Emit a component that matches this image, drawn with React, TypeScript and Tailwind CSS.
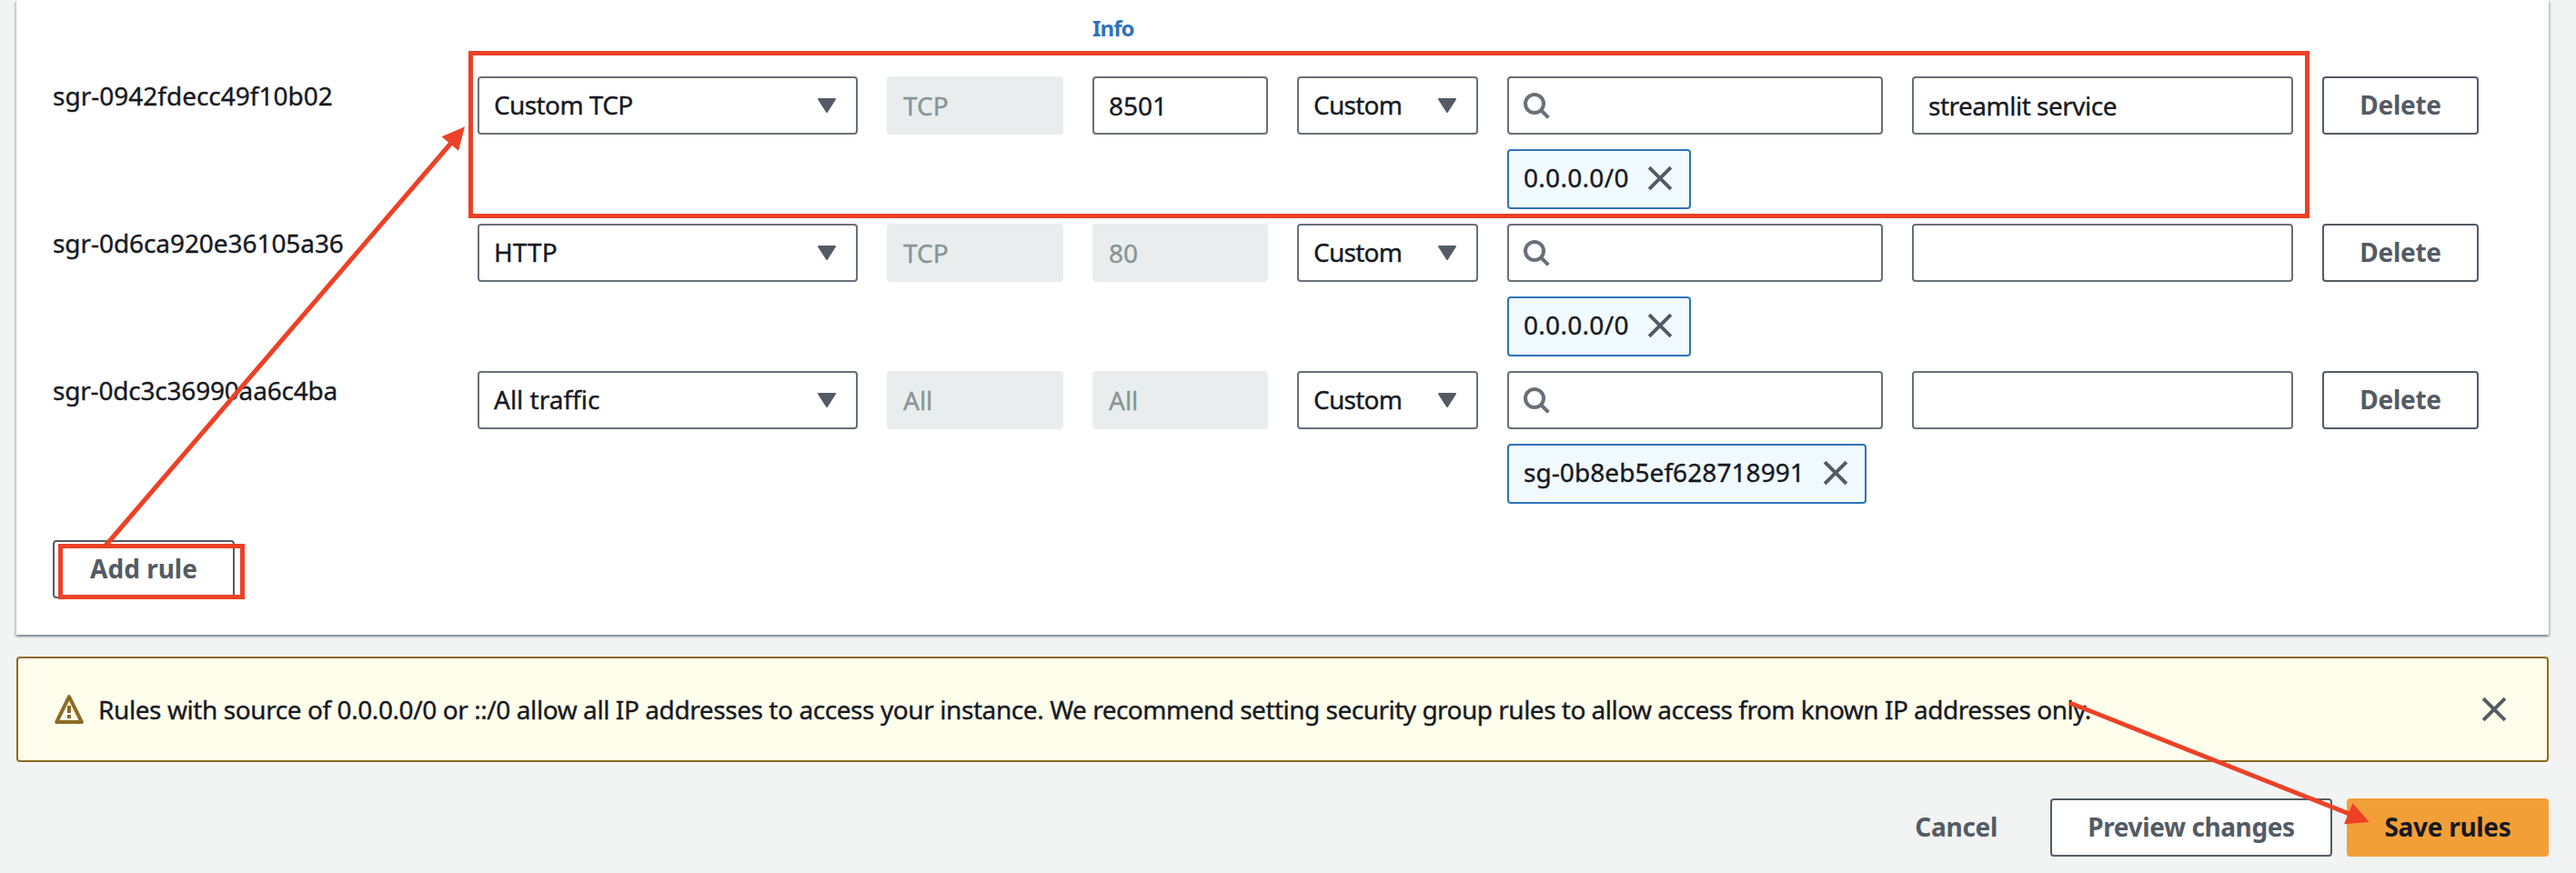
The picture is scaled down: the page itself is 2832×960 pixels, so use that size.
import React from 'react';

type Rule = {
  id: string;
  idClass: string;
  type: string;
  typeClass: string;
  protocol: string;
  port: string;
  portEditable: boolean;
  source: string;
  sourceClass: string;
  description: string;
};

const rules: Rule[] = [
  {
    id: 'sgr-0942fdecc49f10b02',
    idClass: 'tracking-[0px]',
    type: 'Custom TCP',
    typeClass: 'tracking-[-0.6px]',
    protocol: 'TCP',
    port: '8501',
    portEditable: true,
    source: '0.0.0.0/0',
    sourceClass: 'tracking-[0.3px]',
    description: 'streamlit service',
  },
  {
    id: 'sgr-0d6ca920e36105a36',
    idClass: 'tracking-[-0.07px]',
    type: 'HTTP',
    typeClass: 'tracking-[0.1px]',
    protocol: 'TCP',
    port: '80',
    portEditable: false,
    source: '0.0.0.0/0',
    sourceClass: 'tracking-[0.3px]',
    description: '',
  },
  {
    id: 'sgr-0dc3c36990aa6c4ba',
    idClass: 'tracking-[-0.2px]',
    type: 'All traffic',
    typeClass: 'tracking-[0px]',
    protocol: 'All',
    port: 'All',
    portEditable: false,
    source: 'sg-0b8eb5ef628718991',
    sourceClass: 'tracking-[0.07px]',
    description: '',
  },
];

function Caret() {
  return (
    <svg className="h-4 w-5 shrink-0" viewBox="0 0 20 16">
      <path d="M1 1H19L10 15Z" fill="#545b64" stroke="#545b64" strokeWidth="2" strokeLinejoin="round" />
    </svg>
  );
}

function SearchIcon() {
  return (
    <svg className="size-8 shrink-0" viewBox="0 0 32 32" fill="none" stroke="#687078" strokeWidth="4">
      <circle cx="14" cy="14" r="10" />
      <path d="M21 21L29.3 29.3" />
    </svg>
  );
}

function CloseIcon() {
  return (
    <svg className="size-8 shrink-0" viewBox="0 0 32 32" fill="none" stroke="#545b64" strokeWidth="4">
      <path d="M4.1 4.1L27.9 27.9M27.9 4.1L4.1 27.9" />
    </svg>
  );
}

function WarningIcon() {
  return (
    <svg className="size-8 shrink-0" viewBox="0 0 32 32">
      <path d="M16 2.2L29.8 30H2.2Z" fill="none" stroke="#8d6b24" strokeWidth="4" strokeLinejoin="round" />
      <path d="M14 12h4v8h-4zM14 22h4v4h-4z" fill="#8d6b24" />
    </svg>
  );
}

function Select({ label, labelClass, inset }: { label: string; labelClass: string; inset: string }) {
  return (
    <div className={`flex h-16 items-center justify-between rounded-[4px] border-2 border-[#687078] bg-white pl-4 ${inset}`}>
      <span className={`pb-[2px] ${labelClass}`}>{label}</span>
      <Caret />
    </div>
  );
}

function Disabled({ children }: { children: string }) {
  return (
    <div className="flex h-16 items-center rounded-[4px] bg-[#eaeded] pl-[18px] text-[#879596]">{children}</div>
  );
}

function Field({ children, className = '' }: { children?: React.ReactNode; className?: string }) {
  return (
    <div className={`flex h-16 items-center rounded-[4px] border-2 border-[#687078] bg-white ${className}`}>
      {children}
    </div>
  );
}

function OutlineButton({ children, className }: { children: string; className: string }) {
  return (
    <button
      className={`flex h-16 items-center justify-center rounded-[4px] border-2 border-[#545b64] bg-white pb-[2px] font-bold text-[#545b64] [-webkit-text-stroke:0px] ${className}`}
    >
      {children}
    </button>
  );
}

function RuleRow({ rule }: { rule: Rule }) {
  return (
    <div className="grid h-[162px] grid-cols-[435px_418px_194px_193px_199px_413px_419px_172px] items-start gap-x-8">
      <div className={`pt-[2px] ${rule.idClass}`}>{rule.id}</div>
      <Select label={rule.type} labelClass={rule.typeClass} inset="pr-[22px]" />
      <Disabled>{rule.protocol}</Disabled>
      {rule.portEditable ? <Field className="pl-4">{rule.port}</Field> : <Disabled>{rule.port}</Disabled>}
      <Select label="Custom" labelClass="tracking-[-0.75px]" inset="pr-[22px]" />
      <div className="flex flex-col items-start gap-4">
        <Field className="w-full pl-[14px]">
          <SearchIcon />
        </Field>
        <div className="flex h-[66px] items-center gap-[18px] rounded-[4px] border-2 border-[#2e73b8] bg-[#f1faff] pr-4 pl-4">
          <span className={`pb-[4px] ${rule.sourceClass}`}>{rule.source}</span>
          <span className="pb-[2px]">
            <CloseIcon />
          </span>
        </div>
      </div>
      <Field className="pl-4 tracking-[-0.5px]">{rule.description}</Field>
      <OutlineButton className="tracking-[-0.3px]">Delete</OutlineButton>
    </div>
  );
}

function Annotations() {
  return (
    <>
      <div className="pointer-events-none absolute top-[56px] left-[515px] h-[184px] w-[2024px] border-[5px] border-[#ec4126]" />
      <div className="pointer-events-none absolute top-[598px] left-[64px] h-[61px] w-[205px] border-[5px] border-[#ec4126]" />
      <svg className="pointer-events-none absolute top-0 left-0 h-[960px] w-[2832px]" viewBox="0 0 2832 960">
        <g stroke="#ec4126" strokeWidth="5">
          <path d="M116 600L497 156" />
          <path d="M2275.500 773L2584 895.500" />
        </g>
        <g fill="#ec4126">
          <path d="M511 139.300L485.500 150.300L504 165.700Z" />
          <path d="M2604.700 904L2586.500 883.300L2577 906.300Z" />
        </g>
      </svg>
    </>
  );
}

export default function App() {
  return (
    <div className="relative flex h-[960px] w-[2832px] flex-col overflow-hidden bg-[#f2f3f3] pr-[30px] pl-[18px] font-['Noto_Sans',sans-serif] text-[28px] leading-[38px] whitespace-nowrap text-[#16191f] [-webkit-text-stroke:0.35px]">
      <main className="h-[698px] bg-white pl-10 shadow-[0_2px_2px_0_rgba(0,28,36,0.3),2px_2px_2px_0_rgba(0,28,36,0.15),-2px_2px_2px_0_rgba(0,28,36,0.15)]">
        <div className="flex h-[84px] pt-[15px] pl-[1143px] text-[24px] leading-8 font-bold tracking-[-0.9px] text-[#2e73b8] [-webkit-text-stroke:0px]">
          Info
        </div>
        {rules.map((rule) => (
          <RuleRow key={rule.id} rule={rule} />
        ))}
        <div className="pt-6">
          <OutlineButton className="w-[200px]">Add rule</OutlineButton>
        </div>
      </main>

      <section className="mt-6 flex h-[116px] items-center justify-between rounded-[4px] border-2 border-[#8d6b24] bg-[#fffeec] pr-[42px] pl-10">
        <div className="flex items-center gap-4">
          <WarningIcon />
          <p>
            <span className="tracking-[-0.42px]">
              Rules with source of 0.0.0.0/0 or ::/0 allow all IP addresses to access your instance.{' '}
            </span>
            <span className="tracking-[-0.51px]">
              We recommend setting security group rules to allow access from known IP addresses only.
            </span>
          </p>
        </div>
        <CloseIcon />
      </section>

      <footer className="mt-10 flex items-center justify-end">
        <button className="mr-[58px] pb-[2px] font-bold tracking-[-0.3px] text-[#545b64] [-webkit-text-stroke:0px]">
          Cancel
        </button>
        <OutlineButton className="mr-4 w-[310px] tracking-[-0.4px]">Preview changes</OutlineButton>
        <button className="flex h-16 w-[222px] items-center justify-center rounded-[4px] bg-[#f29f38] pb-[2px] font-bold tracking-[-0.3px] [-webkit-text-stroke:0px]">
          Save rules
        </button>
      </footer>

      <Annotations />
    </div>
  );
}
